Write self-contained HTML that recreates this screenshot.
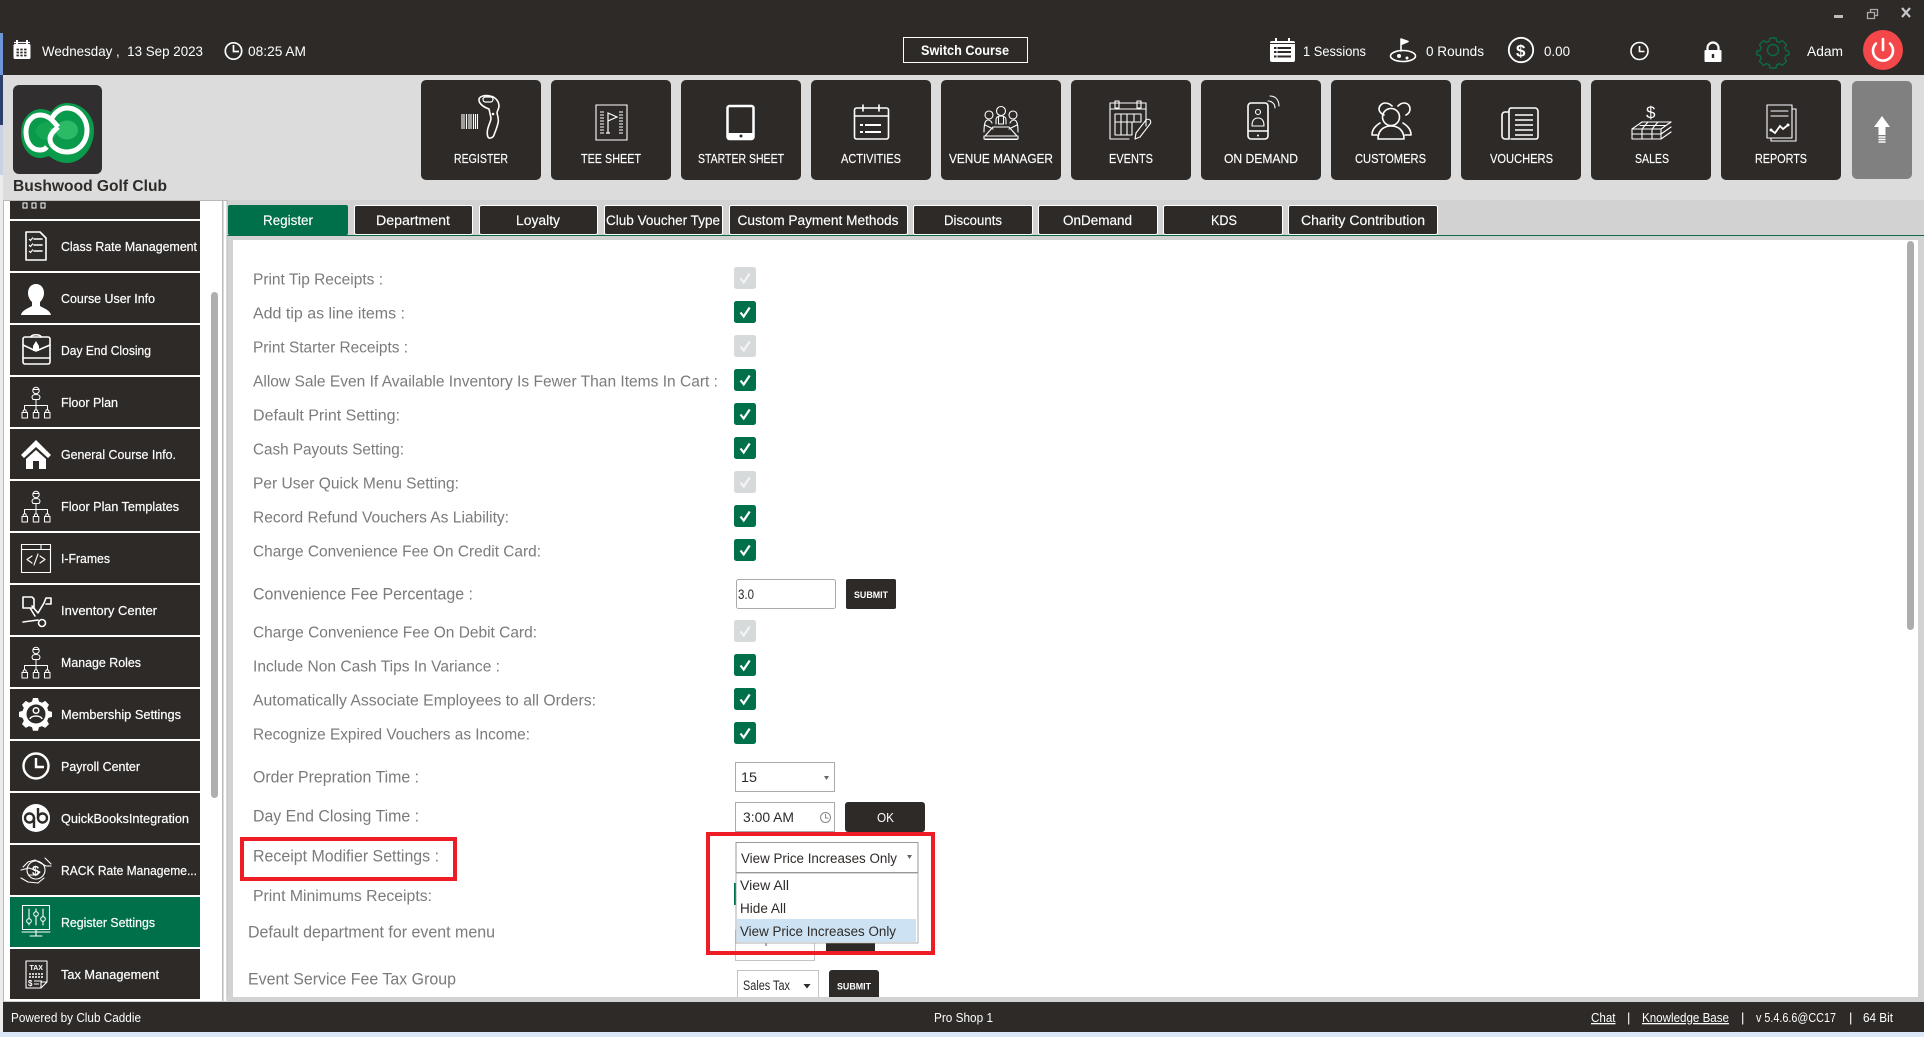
<!DOCTYPE html>
<html lang="en"><head><meta charset="utf-8"><title>Register Settings</title>
<style>
html,body{margin:0;padding:0;background:#d2d2d2;overflow:hidden;width:1924px;height:1037px}
svg{display:block}
text{font-family:"Liberation Sans",sans-serif;white-space:pre}
.w{fill:#fff}
.s{fill:#fff;font-size:13px;stroke:#fff;stroke-width:.2px}
.l{fill:#7b7b7b;font-size:15.5px}
.d{fill:#2e2a28;font-size:13.5px}
.i{fill:none;stroke:#fff;stroke-width:1.6;stroke-linecap:round;stroke-linejoin:round}
.i1{fill:none;stroke:#fff;stroke-width:1.1;stroke-linecap:round;stroke-linejoin:round}
</style></head><body>
<svg width="1924" height="1037" viewBox="0 0 1924 1037" xmlns="http://www.w3.org/2000/svg">
<defs>
<g id="ck"><rect width="22" height="22" rx="2.5" fill="#00704a"/><path d="M6.5 11.5l3.2 4 6-9" fill="none" stroke="#fff" stroke-width="2.2"/></g>
<g id="cd"><rect width="22" height="22" rx="2.5" fill="#d7dadb"/><path d="M6.5 11.5l3.2 4 6-9" fill="none" stroke="#f4f4f4" stroke-width="2.2"/></g>
<g id="org"><g fill="none" stroke="#fff" stroke-width="1" stroke-linejoin="round"><circle cx="0" cy="-10.500" r="3.200"/><path d="M-3.500-11.500h7M-4-3.500c0-2.500 1.500-3 4-3s4 .5 4 3l-1 2h-6z"/><path d="M0-1.500v6M-11.500 8.500v-4h23v4M0 4.500v4"/><path d="M-14 11.500h5.500v5.500h-5.500zM-2.750 11.500h5.500v5.500h-5.500zM8.500 11.500h5.500v5.500h-5.500zM-12.800 11.500v-1.200a1.500 1.500 0 0 1 3 0v1.200M-1.500 11.500v-1.200a1.500 1.500 0 0 1 3 0v1.200M9.800 11.500v-1.200a1.500 1.500 0 0 1 3 0v1.200"/></g></g>
</defs>

<!-- window backdrop -->
<rect width="1924" height="1037" fill="#d2d2d2"/>
<rect x="0" y="0" width="3" height="33" fill="#2e2a28"/>
<rect x="0" y="33" width="3" height="42" fill="#6f95d9"/>
<rect x="0" y="75" width="3" height="50" fill="#2c3e6b"/>
<rect x="0" y="125" width="3" height="50" fill="#c9d2e4"/>
<rect x="0" y="175" width="3" height="862" fill="#ececec"/>
<rect y="1032" width="1924" height="5" fill="#dbe6f6"/>

<!-- top bar -->
<rect x="3" width="1921" height="75" fill="#2e2a28"/>
<!-- window controls -->
<rect x="1834" y="15" width="9" height="3" fill="#bdbdbd"/>
<path d="M1867.500 12.500h7v6h-7zM1870.500 12V9.500h7v6h-3" fill="none" stroke="#aaa" stroke-width="1.300"/>
<path d="M1902 8l8 9M1910 8l-8 9" stroke="#c8c8c8" stroke-width="2.200"/>

<!-- calendar -->
<rect x="13.500" y="44" width="17" height="15" rx="1.500" fill="#fff"/>
<path d="M17 40v6M27 40v6" stroke="#fff" stroke-width="2"/><path d="M14 42.500h16" stroke="#fff" stroke-width="1.200"/>
<path d="M16.500 49.500h11M16.500 52.500h11M16.500 55.500h11" stroke="#2e2a28" stroke-width="1.800" stroke-dasharray="2.400 1.400"/>
<text x="42" y="56" class="w" font-size="14" textLength="161" lengthAdjust="spacingAndGlyphs">Wednesday ,  13 Sep 2023</text>
<circle cx="233.500" cy="51" r="8.200" fill="none" stroke="#fff" stroke-width="1.700"/><path d="M233.500 45v6.500h5.500" fill="none" stroke="#fff" stroke-width="1.700"/>
<text x="248" y="56" class="w" font-size="14" textLength="58" lengthAdjust="spacingAndGlyphs">08:25 AM</text>
<rect x="903.500" y="37.500" width="124" height="25" fill="none" stroke="#fff"/>
<text x="921" y="55" class="w" font-size="13.500" font-weight="700" textLength="88" lengthAdjust="spacingAndGlyphs">Switch Course</text>
<!-- sessions -->
<rect x="1270" y="41" width="25" height="21" rx="2" fill="#fff"/><path d="M1276 38v6M1289 38v6" stroke="#fff" stroke-width="2"/><path d="M1270 43.500h25" stroke="#2e2a28" stroke-width="1"/>
<path d="M1274 48h17M1274 52h17M1274 56.500h17" stroke="#2e2a28" stroke-width="2"/><path d="M1277 46v12" stroke="#fff" stroke-width="1"/>
<text x="1303" y="56" class="w" font-size="14" textLength="63" lengthAdjust="spacingAndGlyphs">1 Sessions</text>
<!-- rounds -->
<g class="i"><ellipse cx="1403" cy="56" rx="12.500" ry="5.500"/><path d="M1401 51V39l7 2.500-7 3"/></g><path d="M1401 39l7 2.500-7 3z" fill="#fff"/><circle cx="1399" cy="56" r="2" fill="#fff"/><circle cx="1407" cy="58" r="1.500" fill="#fff"/>
<text x="1426" y="56" class="w" font-size="14" textLength="58" lengthAdjust="spacingAndGlyphs">0 Rounds</text>
<!-- dollars -->
<circle cx="1521" cy="50" r="12.200" fill="none" stroke="#fff" stroke-width="1.800"/>
<text x="1516" y="56.500" class="w" font-size="17" font-weight="700">$</text>
<text x="1544" y="56" class="w" font-size="14" textLength="26" lengthAdjust="spacingAndGlyphs">0.00</text>
<!-- clock -->
<circle cx="1639.500" cy="51" r="8.500" fill="none" stroke="#fff" stroke-width="1.600"/><path d="M1639.500 46v5.500h5" fill="none" stroke="#fff" stroke-width="1.600"/>
<!-- lock -->
<path d="M1707.500 52v-4a5.500 5.500 0 0 1 11 0v4" fill="none" stroke="#fff" stroke-width="2.200"/><rect x="1704.500" y="50" width="17" height="12" rx="1" fill="#fff"/><path d="M1713 54v4" stroke="#2e2a28" stroke-width="2.400"/>
<!-- gear -->
<g fill="none" stroke="#0b6b45" stroke-width="1.400" transform="translate(-1 0)"><circle cx="1774" cy="50" r="5.500"/><path d="M1771 38h6l.7 3.200 2.900 1.200 2.800-1.800 4.200 4.200-1.800 2.800 1.200 2.900 3 .7M1771 38l-.7 3.200-2.900 1.200-2.800-1.800-4.200 4.200 1.800 2.800-1.200 2.900-3.200.7v3.600l3.200.7 1.200 2.900-1.800 2.800 4.200 4.200 2.800-1.800 2.900 1.200.7 3.200h6l.7-3.200 2.900-1.200 2.800 1.800 4.200-4.200-1.800-2.800 1.200-2.900 3-.7v-3.600"/></g>
<text x="1807" y="56" class="w" font-size="14" textLength="36" lengthAdjust="spacingAndGlyphs">Adam</text>
<!-- power -->
<circle cx="1883" cy="50" r="20" fill="#f4474a"/><path d="M1876 43.500a10 10 0 1 0 14 0" fill="none" stroke="#fff" stroke-width="2.600" stroke-linecap="round"/><path d="M1883 39v11" stroke="#fff" stroke-width="2.600" stroke-linecap="round"/>

<!-- header -->
<rect x="3" y="75" width="1921" height="125" fill="#dcdcdc"/>
<rect x="13" y="85" width="89" height="89" rx="6" fill="#302e2e"/>
<g>
<path d="M21 133c0-13 8-23 19-24 4 0 8 1 11 3 4-6 10-9 16-9 15 0 27 12 27 27 0 18-12 33-27 33-7 0-13-3-18-7-3 1-6 2-9 2-11 0-19-11-19-25z" fill="#0a9a4b"/>
<ellipse cx="47" cy="131" rx="11" ry="9" fill="#14a653"/>
<ellipse cx="67" cy="130" rx="11" ry="9.500" fill="#2bba66"/>
<path d="M50 128h14v5H50z" fill="#2bba66"/>
<g fill="none" stroke="#fff" stroke-width="5">
<path d="M47 147C44 150 42 150 40 150 31 150 26 142 26 132 26 122 32 115 40 115 47 115 52 119 58 127"/>
<path d="M52 118C56 111 62 108 67 108 78 108 87 118 87 130 87 143 78 152 67 152 58 152 50 146 50 139 50 134 54 131 58 127"/>
</g>
</g>
<text x="13" y="191" fill="#2e2a28" font-size="15.500" font-weight="700" textLength="154" lengthAdjust="spacingAndGlyphs">Bushwood Golf Club</text>

<!-- nav buttons -->
<g fill="#2e2a28">
<rect x="421" y="80" width="120" height="100" rx="5"/><rect x="551" y="80" width="120" height="100" rx="5"/><rect x="681" y="80" width="120" height="100" rx="5"/><rect x="811" y="80" width="120" height="100" rx="5"/><rect x="941" y="80" width="120" height="100" rx="5"/><rect x="1071" y="80" width="120" height="100" rx="5"/><rect x="1201" y="80" width="120" height="100" rx="5"/><rect x="1331" y="80" width="120" height="100" rx="5"/><rect x="1461" y="80" width="120" height="100" rx="5"/><rect x="1591" y="80" width="120" height="100" rx="5"/><rect x="1721" y="80" width="120" height="100" rx="5"/>
</g>
<rect x="1852" y="81" width="60" height="98" rx="5" fill="#808080"/>
<g class="w" font-size="13" stroke="#fff" stroke-width=".15">
<text x="454" y="163" textLength="54" lengthAdjust="spacingAndGlyphs">REGISTER</text>
<text x="581" y="163" textLength="60" lengthAdjust="spacingAndGlyphs">TEE SHEET</text>
<text x="698" y="163" textLength="86" lengthAdjust="spacingAndGlyphs">STARTER SHEET</text>
<text x="841" y="163" textLength="60" lengthAdjust="spacingAndGlyphs">ACTIVITIES</text>
<text x="949" y="163" textLength="104" lengthAdjust="spacingAndGlyphs">VENUE MANAGER</text>
<text x="1109" y="163" textLength="44" lengthAdjust="spacingAndGlyphs">EVENTS</text>
<text x="1224" y="163" textLength="74" lengthAdjust="spacingAndGlyphs">ON DEMAND</text>
<text x="1355" y="163" textLength="71" lengthAdjust="spacingAndGlyphs">CUSTOMERS</text>
<text x="1490" y="163" textLength="63" lengthAdjust="spacingAndGlyphs">VOUCHERS</text>
<text x="1635" y="163" textLength="34" lengthAdjust="spacingAndGlyphs">SALES</text>
<text x="1755" y="163" textLength="52" lengthAdjust="spacingAndGlyphs">REPORTS</text>
</g>
<!-- register icon -->
<g class="i"><path d="M479 99c1-3 6-4 11-3 6 1 9 6 9 10 0 3-2 5-2 7 1 4 2 7 1 10-1 5-3 9-4 12-1 3-5 4-6 2-1-2-1-6 0-9 1-4 3-7 3-10l-2-9c-3-1-7-3-9-6-1-1-1-3-1-4z"/></g>
<rect x="483" y="97" width="10" height="5" rx="2.500" fill="none" stroke="#fff" stroke-width="1.200"/><circle cx="493" cy="114" r="1.300" fill="#fff"/>
<path d="M462 114v15M464 114v15M466.500 114v15M469 114v15M471 114v15M473.500 114v15M475.500 114v15M477.500 114v15" stroke="#fff" stroke-width="1.100"/>
<!-- tee sheet icon -->
<path d="M596 105h31v35h-31z" fill="none" stroke="#fff" stroke-width="1.100"/>
<path d="M600 112h4M600 115h4M600 118h4M600 121h4M600 124h4M600 127h4M600 130h4M600 133h4M619 112h4M619 115h4M619 118h4M619 121h4M619 124h4M619 127h4M619 130h4M619 133h4" stroke="#fff" stroke-width="1.100"/>
<path d="M608 133v-20l9 4-9 4M606 133h4" fill="none" stroke="#fff" stroke-width="1.200"/>
<!-- starter sheet icon -->
<rect x="727.500" y="106" width="26" height="33" rx="2" fill="none" stroke="#fff" stroke-width="2.500"/><rect x="727" y="133" width="27" height="6" fill="#fff"/><circle cx="741" cy="136" r="1.500" fill="#2e2a28"/>
<!-- activities icon -->
<rect x="854.500" y="108" width="34" height="31" rx="2" class="i"/>
<path d="M854.500 116h34M863 105v6M879 105v6" class="i"/><path d="M865 125h16M865 132h16" stroke="#fff" stroke-width="2"/><path d="M860 125h3M860 132h3" stroke="#fff" stroke-width="2"/>
<!-- venue icon -->
<g class="i1"><circle cx="989" cy="115" r="4"/><circle cx="1001" cy="111" r="4.500"/><circle cx="1013" cy="115" r="4"/><path d="M996 124v-4c0-3 2-4 5-4s5 1 5 4v4M984 132c0-8 1-12 4-12 2 0 3 1 4 3M1018 132c0-8-1-12-4-12-2 0-3 1-4 3M985 125l8 4M1017 125l-8 4M993 127h16l8 9h-32zM984 136v3h34v-3M985 139.500h32M998.500 117v7h5v-7"/></g>
<!-- events icon -->
<g class="i1" stroke-width="1.300"><path d="M1129 139h-19v-36h36v23"/><path d="M1110 109h36M1115 101h4v7h-4zM1137 101h4v7h-4z"/><path d="M1115 114h26v8h-26zM1115 122h17v13h-17zM1121 114v21M1127 114v21M1134 114v8"/><path d="M1135 139l1-6 10-13c1-1 3-1 4 0s1 3 0 4l-10 13z"/></g>
<!-- on demand icon -->
<g class="i"><rect x="1248" y="103" width="20" height="36" rx="3"/><path d="M1249 131h18"/></g>
<circle cx="1258" cy="112" r="2.500" class="i1"/><path d="M1252 126c0-5 2-8 6-8s6 3 6 8z" class="i1"/><circle cx="1258" cy="135.500" r="1" fill="#fff"/>
<path d="M1268 101c4 0 7 3 7 7M1270 96c7 0 9 6 9 10" class="i1" />
<!-- customers icon -->
<g class="i"><circle cx="1391" cy="117" r="8.500"/><path d="M1378 139c0-8 5-13 13-13s13 5 13 13z"/><path d="M1384 115c-3-1-5-4-5-6 0-3 3-6 6-6 3 0 5 1 7 3M1398 106c2-2 4-3 6-3 4 0 6 3 6 6 0 3-2 5-4 6M1377 135h-5c0-5 3-9 8-12M1405 135h6c0-5-3-9-8-12"/></g>
<!-- vouchers icon -->
<g class="i"><path d="M1511 108h24a3 3 0 0 1 3 3v26a2 2 0 0 1-2 2h-25"/><path d="M1511 108c-1 0-2 1-2 3v28h-4a3 3 0 0 1-3-3v-21a3 3 0 0 1 3-3h4"/></g>
<path d="M1515 115h18M1515 120h18M1515 125h18M1515 130h18M1515 135h18" stroke="#fff" stroke-width="1.500"/>
<!-- sales icon -->
<text x="1646" y="118" class="w" font-size="17">$</text>
<g class="i1" stroke-width="1.400"><path d="M1642 122h29"/><path d="M1632 129l10-7M1671 122l-10 7M1632 129h29v5h-29zM1642 129l6-7M1652 129l6-7M1642 129v10M1652 129v10M1632 134v5h29v-5M1661 134l10-7M1661 139l10-7M1640 125.500h26"/></g>
<!-- reports icon -->
<g class="i1" stroke-width="1.400"><rect x="1767" y="105" width="25" height="33"/><path d="M1792 109h4v32h-25v-3M1771 111h17M1771 116h17"/></g>
<path d="M1771 130l4 3 5-7 3 3 5-4" fill="none" stroke="#fff" stroke-width="1.800"/><circle cx="1771" cy="130" r="1.500" fill="#fff"/><circle cx="1788" cy="125" r="1.500" fill="#fff"/>
<!-- up arrow -->
<path d="M1882 116l8 11h-4.500v8h-7v-8h-4.500z" fill="#fff"/><path d="M1878.500 137h7M1878.500 139.500h7M1878.500 142h7" stroke="#fff" stroke-width="1.500"/>

<!-- tabs strip -->
<rect x="227" y="200" width="1697" height="35" fill="#d2d2d2"/>
<rect x="227" y="235" width="1697" height="1" fill="#0b6b45"/>
<rect x="228" y="205" width="120" height="30" rx="2" fill="#00704a"/>
<g fill="#2e2a28" stroke="#fff">
<rect x="354.500" y="205.500" width="118" height="29" rx="2"/><rect x="479.500" y="205.500" width="118" height="29" rx="2"/><rect x="604.500" y="205.500" width="118" height="29" rx="2"/><rect x="729.500" y="205.500" width="178" height="29" rx="2"/><rect x="913.500" y="205.500" width="119" height="29" rx="2"/><rect x="1038.500" y="205.500" width="119" height="29" rx="2"/><rect x="1163.500" y="205.500" width="119" height="29" rx="2"/><rect x="1288.500" y="205.500" width="149" height="29" rx="2"/>
</g>
<g class="w" font-size="13.500" stroke="#fff" stroke-width=".15">
<text x="263" y="225" textLength="50" lengthAdjust="spacingAndGlyphs">Register</text>
<text x="376" y="225" textLength="74" lengthAdjust="spacingAndGlyphs">Department</text>
<text x="516" y="225" textLength="44" lengthAdjust="spacingAndGlyphs">Loyalty</text>
<text x="606" y="225" textLength="114" lengthAdjust="spacingAndGlyphs">Club Voucher Type</text>
<text x="737.500" y="225" textLength="161" lengthAdjust="spacingAndGlyphs">Custom Payment Methods</text>
<text x="944" y="225" textLength="58" lengthAdjust="spacingAndGlyphs">Discounts</text>
<text x="1063" y="225" textLength="69" lengthAdjust="spacingAndGlyphs">OnDemand</text>
<text x="1211" y="225" textLength="26" lengthAdjust="spacingAndGlyphs">KDS</text>
<text x="1301" y="225" textLength="124" lengthAdjust="spacingAndGlyphs">Charity Contribution</text>
</g>

<!-- sidebar -->
<rect x="3" y="200" width="1" height="802" fill="#b9b9b9"/>
<rect x="4" y="201" width="218" height="800" fill="#fff"/>
<rect x="222" y="201" width="1.500" height="800" fill="#b9b9b9"/>
<rect x="223.500" y="201" width="3.500" height="800" fill="#fff"/>
<rect x="226.500" y="201" width="1" height="800" fill="#b9b9b9"/>
<rect x="4" y="200" width="224" height="1" fill="#b9b9b9"/>
<rect x="211" y="292" width="7" height="506" rx="3.500" fill="#b0aeae"/>
<g fill="#2e2a28">
<rect x="10" y="201" width="190" height="18"/>
<rect x="10" y="221" width="190" height="50"/><rect x="10" y="273" width="190" height="50"/><rect x="10" y="325" width="190" height="50"/><rect x="10" y="377" width="190" height="50"/><rect x="10" y="429" width="190" height="50"/><rect x="10" y="481" width="190" height="50"/><rect x="10" y="533" width="190" height="50"/><rect x="10" y="585" width="190" height="50"/><rect x="10" y="637" width="190" height="50"/><rect x="10" y="689" width="190" height="50"/><rect x="10" y="741" width="190" height="50"/><rect x="10" y="793" width="190" height="50"/><rect x="10" y="845" width="190" height="50"/><rect x="10" y="949" width="190" height="50"/>
</g>
<rect x="10" y="897" width="190" height="50" fill="#00704a"/>
<g class="s">
<text x="61" y="251" textLength="136" lengthAdjust="spacingAndGlyphs">Class Rate Management</text>
<text x="61" y="303" textLength="94" lengthAdjust="spacingAndGlyphs">Course User Info</text>
<text x="61" y="355" textLength="90" lengthAdjust="spacingAndGlyphs">Day End Closing</text>
<text x="61" y="407" textLength="57" lengthAdjust="spacingAndGlyphs">Floor Plan</text>
<text x="61" y="459" textLength="115" lengthAdjust="spacingAndGlyphs">General Course Info.</text>
<text x="61" y="511" textLength="118" lengthAdjust="spacingAndGlyphs">Floor Plan Templates</text>
<text x="61" y="563" textLength="49" lengthAdjust="spacingAndGlyphs">I-Frames</text>
<text x="61" y="615" textLength="96" lengthAdjust="spacingAndGlyphs">Inventory Center</text>
<text x="61" y="667" textLength="80" lengthAdjust="spacingAndGlyphs">Manage Roles</text>
<text x="61" y="719" textLength="120" lengthAdjust="spacingAndGlyphs">Membership Settings</text>
<text x="61" y="771" textLength="79" lengthAdjust="spacingAndGlyphs">Payroll Center</text>
<text x="61" y="823" textLength="128" lengthAdjust="spacingAndGlyphs">QuickBooksIntegration</text>
<text x="61" y="875" textLength="136" lengthAdjust="spacingAndGlyphs">RACK Rate Manageme...</text>
<text x="61" y="927" textLength="94" lengthAdjust="spacingAndGlyphs">Register Settings</text>
<text x="61" y="979" textLength="98" lengthAdjust="spacingAndGlyphs">Tax Management</text>
</g>
<!-- sidebar icons -->
<path d="M23 203h4v5h-4zM32 203h4v5h-4zM41 203h4v5h-4z" fill="none" stroke="#fff"/>
<g class="i"><path d="M26 232h14l6 6v22H26z"/><path d="M34 239h8M34 245h8M34 251h8"/></g><path d="M29 239l1.500 1.500 2.500-3M29 245l1.500 1.500 2.500-3M29 251l1.500 1.500 2.500-3" fill="none" stroke="#fff" stroke-width="1.200"/>
<path d="M36 284c5 0 8 4 8 9 0 4-2 7-4 9v4c3 2 10 4 11 9H21c1-5 8-7 11-9v-4c-2-2-4-5-4-9 0-5 3-9 8-9z" fill="#fff"/>
<g class="i"><rect x="23" y="337" width="27" height="27" rx="2"/><path d="M23 345l13 6 14-6M23 358h27M31 337c0-3 10-3 10 0"/></g><path d="M36 341l3 5v5h-6v-5z" fill="#fff"/>
<use href="#org" x="36" y="401"/>
<path d="M36 440L21 455l3 3 12-11 12 11 3-3zM26 459l10-9 10 9v10h-7v-8h-6v8h-7z" fill="#fff"/>
<use href="#org" x="36" y="505"/>
<g class="i1" stroke-width="1.300"><rect x="21.500" y="544.500" width="29" height="28"/><path d="M21.500 549.500h29M41 545v4"/><path d="M32 556l-5 3.500 5 3.500M40 556l5 3.500-5 3.500M38 554l-4 11"/></g>
<g class="i"><path d="M23 597h9l2 2v9H23zM30 608l5 8M32 606l6 7 6-10M44 603l2-5h5v6h-5M23 622l15-2"/><circle cx="42" cy="623" r="3.500"/></g>
<use href="#org" x="36" y="661"/>
<path d="M36 698l2 0 1 3.500 3 1.200 3.200-1.800 3.800 3.800-1.800 3.200 1.200 3 3.600 1v5l-3.600 1-1.200 3 1.800 3.200-3.800 3.800-3.200-1.800-3 1.200-1 3.500h-5l-1-3.500-3-1.200-3.200 1.800-3.800-3.800 1.800-3.200-1.200-3-3.600-1v-5l3.600-1 1.200-3-1.800-3.200 3.800-3.800 3.200 1.800 3-1.200 1-3.500z" fill="#fff"/>
<circle cx="36" cy="714" r="9.500" fill="#2e2a28"/><circle cx="36" cy="710.500" r="2.800" fill="none" stroke="#fff" stroke-width="1.500"/><path d="M30 719c1-4 11-4 12 0" fill="none" stroke="#fff" stroke-width="1.500"/>
<circle cx="36" cy="766" r="12.500" fill="none" stroke="#fff" stroke-width="2.400"/><path d="M36 758v9h8" fill="none" stroke="#fff" stroke-width="2.400"/>
<circle cx="36" cy="818" r="14" fill="#fff"/>
<g fill="none" stroke="#2e2a28" stroke-width="2.400"><circle cx="29.500" cy="818" r="4.500"/><circle cx="42.500" cy="818" r="4.500"/><path d="M34 818v10M38 818v-10"/></g>
<g class="i1" stroke-width="1.200"><circle cx="36" cy="870" r="9"/><path d="M21 870l8-2 11 4-3 3h-8M21 878l7 4 10 1 6-5M51 866l-5 0-11-6-7 2-5 5M45 858l6 6"/></g><text x="32" y="875" class="w" font-size="13" font-weight="700">$</text>
<g class="i1" stroke-width="1.300"><rect x="22.500" y="905.500" width="27" height="24"/><path d="M29 909v16M36 909v16M43 909v16M22 932h28M30 936h12M36 930v6"/></g><circle cx="29" cy="921" r="2.300" fill="#00704a" stroke="#fff"/><circle cx="36" cy="914" r="2.300" fill="#00704a" stroke="#fff"/><circle cx="43" cy="919" r="2.300" fill="#00704a" stroke="#fff"/>
<g class="i1" stroke-width="1.200"><path d="M26 961h21v21l-6 6H26zM47 982h-6v6"/></g><text x="29.500" y="970" class="w" font-size="7" font-weight="700">TAX</text><path d="M29 974h15M29 977h15" stroke="#fff" stroke-width="1.600" stroke-dasharray="2 1"/><text x="28" y="986" class="w" font-size="8" font-weight="700">$</text><path d="M34 981h8M34 984h5" stroke="#fff"/>

<!-- content panel -->
<rect x="233" y="240" width="1685" height="757" fill="#fff"/>
<rect x="1907" y="241" width="7" height="389" rx="3.500" fill="#aeacac"/>

<!-- labels -->
<g class="l">
<text x="253" y="284.500" textLength="130" lengthAdjust="spacingAndGlyphs">Print Tip Receipts :</text>
<text x="253" y="318.500" textLength="152" lengthAdjust="spacingAndGlyphs">Add tip as line items :</text>
<text x="253" y="352.500" textLength="155" lengthAdjust="spacingAndGlyphs">Print Starter Receipts :</text>
<text x="253" y="386.500" textLength="465" lengthAdjust="spacingAndGlyphs">Allow Sale Even If Available Inventory Is Fewer Than Items In Cart :</text>
<text x="253" y="420.500" textLength="147" lengthAdjust="spacingAndGlyphs">Default Print Setting:</text>
<text x="253" y="454.500" textLength="151" lengthAdjust="spacingAndGlyphs">Cash Payouts Setting:</text>
<text x="253" y="488.500" textLength="206" lengthAdjust="spacingAndGlyphs">Per User Quick Menu Setting:</text>
<text x="253" y="522.500" textLength="256" lengthAdjust="spacingAndGlyphs">Record Refund Vouchers As Liability:</text>
<text x="253" y="556.500" textLength="288" lengthAdjust="spacingAndGlyphs">Charge Convenience Fee On Credit Card:</text>
<text x="253" y="599.500" font-size="16.500" textLength="220" lengthAdjust="spacingAndGlyphs">Convenience Fee Percentage :</text>
<text x="253" y="637.500" textLength="284" lengthAdjust="spacingAndGlyphs">Charge Convenience Fee On Debit Card:</text>
<text x="253" y="671.500" textLength="247" lengthAdjust="spacingAndGlyphs">Include Non Cash Tips In Variance :</text>
<text x="253" y="705.500" textLength="343" lengthAdjust="spacingAndGlyphs">Automatically Associate Employees to all Orders:</text>
<text x="253" y="739.500" textLength="277" lengthAdjust="spacingAndGlyphs">Recognize Expired Vouchers as Income:</text>
<text x="253" y="782.500" font-size="16.500" textLength="166" lengthAdjust="spacingAndGlyphs">Order Prepration Time :</text>
<text x="253" y="821.500" font-size="16.500" textLength="166" lengthAdjust="spacingAndGlyphs">Day End Closing Time :</text>
<text x="253" y="861.500" font-size="16.500" textLength="186" lengthAdjust="spacingAndGlyphs">Receipt Modifier Settings :</text>
<text x="253" y="901" textLength="179" lengthAdjust="spacingAndGlyphs">Print Minimums Receipts:</text>
<text x="248" y="937.500" font-size="16.500" textLength="247" lengthAdjust="spacingAndGlyphs">Default department for event menu</text>
<text x="248" y="984.500" font-size="16.500" textLength="208" lengthAdjust="spacingAndGlyphs">Event Service Fee Tax Group</text>
</g>

<!-- checkboxes -->
<use href="#cd" x="734" y="267"/><use href="#ck" x="734" y="301"/><use href="#cd" x="734" y="335"/><use href="#ck" x="734" y="369"/><use href="#ck" x="734" y="403"/><use href="#ck" x="734" y="437"/><use href="#cd" x="734" y="471"/><use href="#ck" x="734" y="505"/><use href="#ck" x="734" y="539"/>
<use href="#cd" x="734" y="620"/><use href="#ck" x="734" y="654"/><use href="#ck" x="734" y="688"/><use href="#ck" x="734" y="722"/>
<rect x="734" y="883" width="3" height="22" fill="#00704a"/>

<!-- convenience fee -->
<rect x="736.500" y="579.500" width="99" height="29" rx="2" fill="#fff" stroke="#aaa"/>
<text x="738" y="599" class="d" font-size="13" textLength="16" lengthAdjust="spacingAndGlyphs">3.0</text>
<rect x="846" y="579" width="50" height="30" rx="2" fill="#2e2a28"/>
<text x="854" y="598" class="w" font-size="9.500" font-weight="700" textLength="34" lengthAdjust="spacingAndGlyphs">SUBMIT</text>

<!-- order prep -->
<rect x="735.500" y="762.500" width="99" height="29" fill="#fff" stroke="#aaa"/>
<text x="741" y="782" class="d" textLength="16" lengthAdjust="spacingAndGlyphs">15</text>
<path d="M824 776h5l-2.500 4z" fill="#666"/>

<!-- day end -->
<rect x="735.500" y="802.500" width="99" height="29" fill="#fff" stroke="#aaa"/>
<text x="743" y="822" class="d" textLength="51" lengthAdjust="spacingAndGlyphs">3:00 AM</text>
<circle cx="825.500" cy="817.500" r="5" fill="none" stroke="#888"/><path d="M825.500 814v4h3" fill="none" stroke="#888"/>
<rect x="845" y="802" width="80" height="30" rx="3" fill="#2e2a28"/>
<text x="877" y="822" class="w" font-size="13" textLength="17" lengthAdjust="spacingAndGlyphs">OK</text>

<!-- stuff behind dropdown -->
<rect x="735.500" y="930.500" width="79" height="30" fill="#fff" stroke="#c4c4c4"/>
<path d="M766 943v3" stroke="#555"/>
<rect x="826" y="930" width="49" height="25" fill="#2e2a28"/>

<!-- dropdown -->
<rect x="736" y="842.500" width="182" height="30" fill="#fff" stroke="#999"/>
<text x="741" y="863" class="d" textLength="156" lengthAdjust="spacingAndGlyphs">View Price Increases Only</text>
<path d="M907 855h5l-2.500 4z" fill="#666"/>
<rect x="736" y="873" width="182" height="70" fill="#fff" stroke="#999" stroke-width=".8"/>
<rect x="737" y="919" width="179" height="23" fill="#cde3f3"/>
<text x="740" y="890" class="d" textLength="49" lengthAdjust="spacingAndGlyphs">View All</text>
<text x="740" y="913" class="d" textLength="46" lengthAdjust="spacingAndGlyphs">Hide All</text>
<text x="740" y="936" class="d" textLength="156" lengthAdjust="spacingAndGlyphs">View Price Increases Only</text>

<!-- sales tax -->
<rect x="737.500" y="970.500" width="81" height="30" fill="#fff" stroke="#c4c4c4"/>
<text x="743" y="990" class="d" font-size="12.500" textLength="47" lengthAdjust="spacingAndGlyphs">Sales Tax</text>
<path d="M803.500 984h7l-3.500 4.500z" fill="#2e2a28"/>
<rect x="829" y="970" width="50" height="32" rx="3" fill="#2e2a28"/>
<text x="837" y="989.500" class="w" font-size="9.500" font-weight="700" textLength="34" lengthAdjust="spacingAndGlyphs">SUBMIT</text>
<rect x="227" y="997" width="1697" height="5" fill="#d2d2d2"/>

<!-- red annotation boxes -->
<rect x="242" y="839" width="213" height="40" fill="none" stroke="#ee1c25" stroke-width="4"/>
<rect x="708" y="834" width="225" height="119" fill="none" stroke="#ee1c25" stroke-width="4"/>

<!-- footer -->
<rect x="3" y="1002" width="1921" height="30" fill="#2e2a28"/>
<g class="w" font-size="13">
<text x="11" y="1022" textLength="130" lengthAdjust="spacingAndGlyphs">Powered by Club Caddie</text>
<text x="934" y="1022" textLength="59" lengthAdjust="spacingAndGlyphs">Pro Shop 1</text>
<text x="1591" y="1022" text-decoration="underline" textLength="24.500" lengthAdjust="spacingAndGlyphs">Chat</text>
<text x="1627" y="1022">|</text>
<text x="1642" y="1022" text-decoration="underline" textLength="87" lengthAdjust="spacingAndGlyphs">Knowledge Base</text>
<text x="1741" y="1022">|</text>
<text x="1756" y="1022" textLength="80" lengthAdjust="spacingAndGlyphs">v 5.4.6.6@CC17</text>
<text x="1849" y="1022">|</text>
<text x="1863" y="1022" textLength="30" lengthAdjust="spacingAndGlyphs">64 Bit</text>
</g>
</svg>
</body></html>
